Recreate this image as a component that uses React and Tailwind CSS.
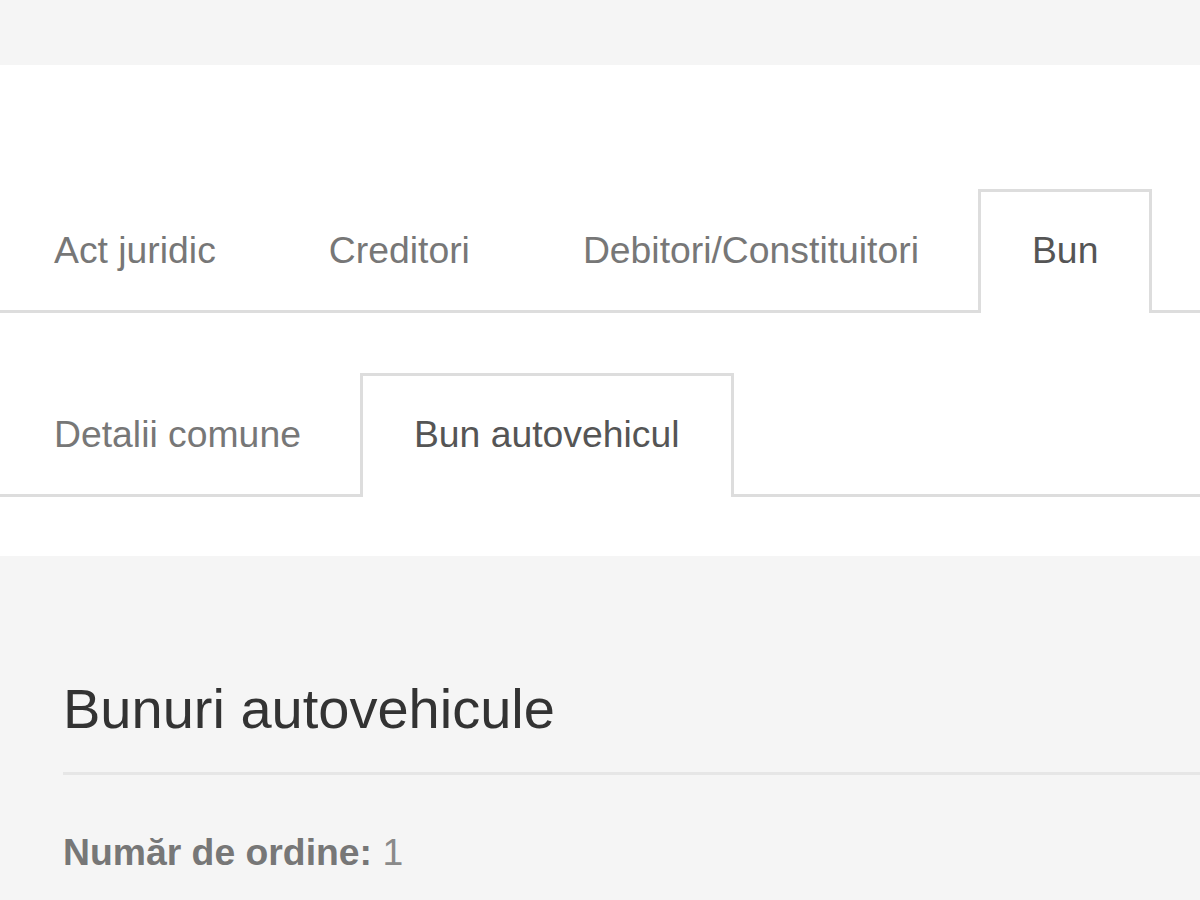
export default function App() {
  const row1 = [
    { label: "Act juridic" },
    { label: "Creditori" },
    { label: "Debitori/Constituitori" },
    { label: "Bun", active: true },
  ];
  const row2 = [
    { label: "Detalii comune" },
    { label: "Bun autovehicul", active: true },
  ];

  const Tabs = ({ items }) => (
    <ul className="flex border-b-[3px] border-[#dddddd]">
      {items.map((t) => (
        <li
          key={t.label}
          className={
            t.active
              ? "mr-[5px] -mb-[3px] h-[124px] border-[3px] border-b-0 border-[#dddddd] bg-white px-[51px] pt-[32px] text-[37.33px] leading-[53px] text-[#555555] whitespace-nowrap"
              : "mr-[5px] h-[121px] border-[3px] border-b-0 border-transparent px-[51px] pt-[32px] text-[37.33px] leading-[53px] text-[#777777] whitespace-nowrap"
          }
        >
          {t.label}
        </li>
      ))}
    </ul>
  );

  return (
    <div
      className="min-h-[900px] w-[1200px] overflow-hidden bg-[#f5f5f5]"
      style={{ fontFamily: '"Liberation Sans", Arial, sans-serif' }}
    >
      <div className="h-[65px] bg-[#f5f5f5]" />
      <div className="bg-white pt-[124px] pb-[59px]">
        <Tabs items={row1} />
        <div className="h-[60px]" />
        <Tabs items={row2} />
      </div>
      <div className="pl-[63px] pt-[122px]">
        <h2 className="text-[56px] leading-[62px] font-normal text-[#333333]">
          Bunuri autovehicule
        </h2>
        <div className="mt-[32px] h-[3px] bg-[#e6e6e6]" />
        <p className="mt-[51px] text-[37.33px] leading-[53px] text-[#777777]">
          <span className="font-bold">Număr de ordine:</span>{" "}
          <span className="text-[#8a8a8a]">1</span>
        </p>
      </div>
    </div>
  );
}
